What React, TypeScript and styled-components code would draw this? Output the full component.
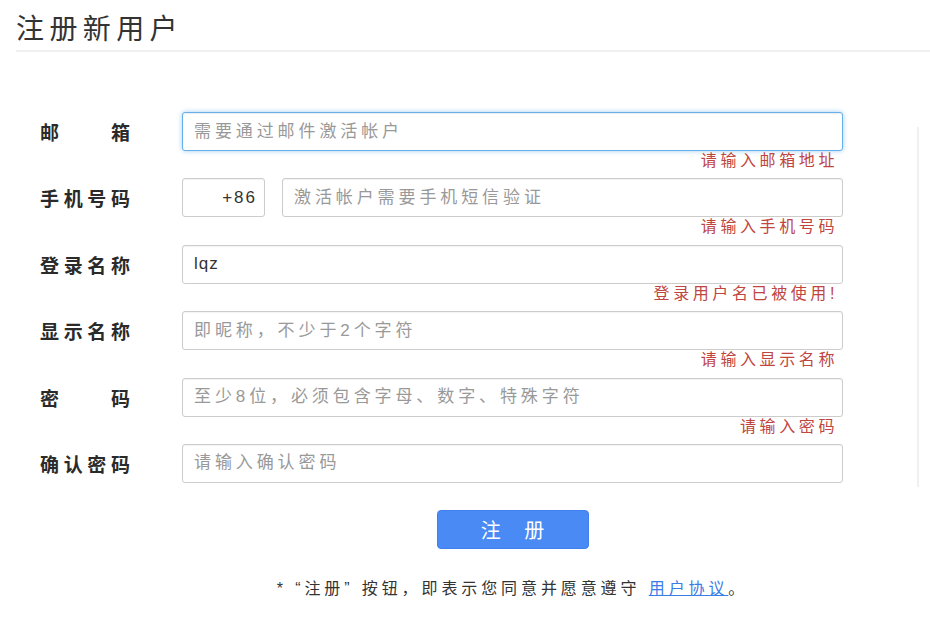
import styled, { createGlobalStyle } from "styled-components";

const GlobalStyle = createGlobalStyle`
  html, body {
    margin: 0;
    padding: 0;
    background: #fff;
  }
  body {
    font-family: "Liberation Sans", "Noto Sans CJK SC", sans-serif;
    color: #333;
  }
`;

type Field = {
  label: string;
  placeholder?: string;
  value?: string;
  error?: string;
  phone?: boolean;
  active?: boolean;
};

const fields: Field[] = [
  { label: "邮箱", placeholder: "需要通过邮件激活帐户", error: "请输入邮箱地址", active: true },
  { label: "手机号码", placeholder: "激活帐户需要手机短信验证", error: "请输入手机号码", phone: true },
  { label: "登录名称", value: "lqz", error: "登录用户名已被使用!" },
  { label: "显示名称", placeholder: "即昵称，不少于2个字符", error: "请输入显示名称" },
  { label: "密码", placeholder: "至少8位，必须包含字母、数字、特殊字符", error: "请输入密码" },
  { label: "确认密码", placeholder: "请输入确认密码" },
];

const App = () => {
  return (
    <Page>
      <GlobalStyle />
      <Header>
        <Title>注册新用户</Title>
      </Header>
      <Main>
        <Form>
          {fields.map((f) => (
            <Row key={f.label}>
              <Label>{f.label}</Label>
              <Controls>
                {f.phone && <Prefix readOnly defaultValue="+86" />}
                <Input
                  $active={f.active}
                  $filled={!!f.value}
                  placeholder={f.placeholder}
                  defaultValue={f.value}
                />
              </Controls>
              <Message>{f.error}</Message>
            </Row>
          ))}
          <Actions>
            <SubmitButton type="button">注 册</SubmitButton>
            <Agreement>
              * “注册” 按钮，即表示您同意并愿意遵守 <AgreementLink href="#">用户协议</AgreementLink>。
            </Agreement>
          </Actions>
        </Form>
        <Aside />
      </Main>
    </Page>
  );
};

const Page = styled.div`
  width: 930px;
  height: 634px;
  overflow: hidden;
`;

const Header = styled.header`
  margin-left: 16px;
  padding: 13px 0 4px;
  border-bottom: 2px solid #f0f0f0;
`;

const Title = styled.h1`
  margin: 0;
  font-size: 28px;
  line-height: 33px;
  font-weight: normal;
  letter-spacing: 5.4px;
  color: #333;
`;

const Main = styled.main`
  display: flex;
  padding-top: 60px;
`;

const Form = styled.form`
  padding-left: 40px;
  width: 803px;
`;

const Row = styled.div`
  display: grid;
  grid-template-columns: 142px 661px;
  grid-template-rows: 39px 20px;
  margin-bottom: 7.4px;
`;

const Label = styled.label`
  align-self: center;
  width: 90px;
  font-size: 19px;
  font-weight: bold;
  color: #2a2a2a;
  text-align: justify;
  text-align-last: justify;
`;

const Controls = styled.div`
  display: flex;
  gap: 17px;
`;

const Input = styled.input<{ $active?: boolean; $filled?: boolean }>`
  flex: 1;
  min-width: 0;
  box-sizing: border-box;
  height: 39px;
  padding: 0 11px;
  border: 1px solid ${(p) => (p.$active ? "#66afe9" : "#ccc")};
  border-radius: 3px;
  box-shadow: ${(p) =>
    p.$active
      ? "inset 0 1px 1px rgba(0,0,0,.075), 0 0 5px rgba(102,175,233,.6)"
      : "inset 0 1px 1px rgba(0,0,0,.05)"};
  font-family: inherit;
  font-size: 17px;
  letter-spacing: ${(p) => (p.$filled ? "1px" : "3.9px")};
  color: #333;
  outline: none;
  &::placeholder {
    color: #999;
  }
`;

const Prefix = styled(Input)`
  flex: 0 0 83px;
  text-align: right;
  padding-right: 7px;
  letter-spacing: 2px;
  font-size: 17px;
`;

const Message = styled.div`
  grid-column: 2;
  text-align: right;
  padding-right: 5px;
  font-size: 16px;
  line-height: 20px;
  letter-spacing: 3.6px;
  color: #bf4540;
  white-space: nowrap;
`;

const Actions = styled.div`
  margin-left: 142px;
  width: 661px;
  display: flex;
  flex-direction: column;
  align-items: center;
`;

const SubmitButton = styled.button`
  width: 152px;
  height: 39px;
  border: 1px solid #3f80ee;
  border-radius: 4px;
  background: #4a8af4;
  color: #fff;
  font-family: inherit;
  font-size: 20px;
  letter-spacing: 9px;
  text-indent: 9px;
  cursor: pointer;
`;

const Agreement = styled.p`
  margin: 28px 0 0;
  font-size: 16px;
  line-height: 24px;
  letter-spacing: 3.9px;
  color: #333;
`;

const AgreementLink = styled.a`
  color: #3a7de6;
  text-decoration: underline;
`;

const Aside = styled.aside`
  align-self: flex-start;
  margin: 15px 0 0 74px;
  height: 360px;
  border-left: 2px solid #f0f0f0;
`;

export default App;
